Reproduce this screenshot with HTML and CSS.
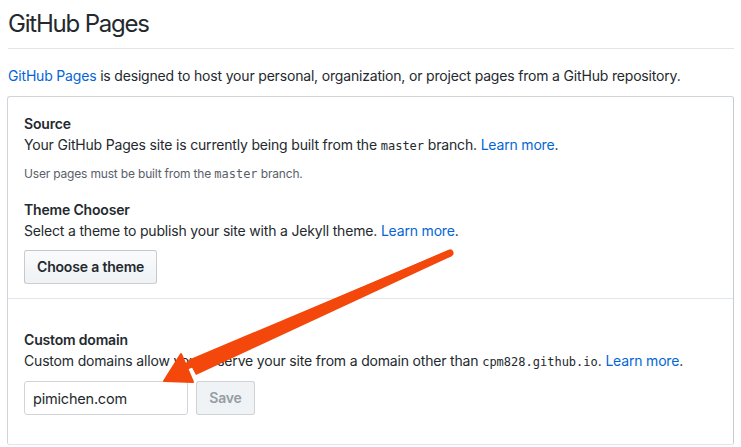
FILE: index.html
```html
<!DOCTYPE html>
<html>
<head>
<meta charset="utf-8">
<link rel="stylesheet" href="styles.css">
</head>
<body>
<div class="page">
  <h2 class="title">GitHub Pages</h2>
  <p class="intro"><a href="#">GitHub Pages</a> is designed to host your personal, organization, or project pages from a GitHub repository.</p>
  <div class="box">
    <div class="section first">
      <h3 class="label">Source</h3>
      <p class="text">Your GitHub Pages site is currently being built from the <code>master</code> branch. <a href="#">Learn more</a>.</p>
      <p class="note">User pages must be built from the <code>master</code> branch.</p>
      <h3 class="label spaced">Theme Chooser</h3>
      <p class="text">Select a theme to publish your site with a Jekyll theme. <a href="#">Learn more</a>.</p>
      <button class="btn">Choose a theme</button>
    </div>
    <div class="section second">
      <h3 class="label">Custom domain</h3>
      <p class="text">Custom domains allow you to serve your site from a domain other than <code>cpm828.github.io</code>. <a href="#">Learn more</a>.</p>
      <div class="form-row">
        <input class="field" type="text" value="pimichen.com">
        <button class="btn disabled">Save</button>
      </div>
    </div>
  </div>
</div>
<svg class="arrow" width="741" height="447" viewBox="0 0 741 447">
  <path d="M450 253 L187 366" stroke="#f4470b" stroke-width="7" stroke-linecap="round" fill="none"/>
  <path d="M449 250 L452 256 L196 375 L188 360 Z" fill="#f4470b"/>
  <polygon points="164,381 181,354 193,382" fill="#f4470b" stroke="#f4470b" stroke-width="2" stroke-linejoin="round"/>
</svg>
</body>
</html>
```
FILE: styles.css
```css
html, body {
  margin: 0;
  padding: 0;
  background: #fff;
}
body {
  font-family: Inter, "Liberation Sans", Arial, sans-serif;
  color: #24292e;
  font-size: 14px;
  line-height: 1.5;
  letter-spacing: -0.18px;
  position: relative;
  overflow: hidden;
  height: 447px;
}
.page {
  margin-left: 7px;
  width: 727px;
}
a {
  color: #0366d6;
  text-decoration: none;
}
code {
  font-family: "DejaVu Sans Mono", monospace;
  font-size: 12px;
  letter-spacing: 0;
}
.title {
  margin: 9px 0 0 1px;
  font-size: 24px;
  font-weight: 400;
  line-height: 30px;
  padding-bottom: 9px;
  border-bottom: 1px solid #e1e4e8;
  letter-spacing: -1.2px;
}
.intro {
  margin: 16px 0 10px 1px;
  line-height: 21px;
}
.box {
  border: 1px solid #d1d5da;
  border-radius: 3px;
  border-bottom: 0;
  border-right-color: #c6cbd1;
}
.section {
  padding: 16px;
}
.section.first {
  padding-bottom: 14px;
}
.section.second {
  border-top: 1px solid #e1e4e8;
  padding-top: 30px;
  padding-bottom: 29px;
  border-bottom: 1px solid #e1e4e8;
}
.label {
  margin: 0;
  font-size: 14px;
  font-weight: 600;
  line-height: 21px;
}
.label.spaced {
  margin-top: 16px;
}
.text {
  margin: 0;
  line-height: 21px;
}
.note {
  margin: 8px 0 0;
  font-size: 12px;
  line-height: 18px;
  color: #586069;
}
.btn {
  margin-top: 8px;
  font-family: inherit;
  font-size: 14px;
  font-weight: 600;
  letter-spacing: -0.18px;
  line-height: 20px;
  padding: 6px 12px;
  color: #24292e;
  background: linear-gradient(#fafbfc, #eff3f6 90%);
  border: 1px solid rgba(27, 31, 35, 0.2);
  border-radius: 3px;
  height: 34px;
}
.section.first .btn {
  margin-top: 9px;
}
.form-row {
  display: flex;
  gap: 8px;
  margin-top: 8px;
}
.form-row .btn {
  margin-top: 0;
}
.field {
  width: 164px;
  height: 34px;
  box-sizing: border-box;
  padding: 6px 8px;
  font-family: inherit;
  font-size: 14.5px;
  letter-spacing: -0.2px;
  color: #24292e;
  border: 1px solid #d1d5da;
  border-radius: 3px;
  outline: none;
}
.btn.disabled {
  color: #959da5;
  background: #eff3f6;
  border-color: rgba(27, 31, 35, 0.15);
  width: 59px;
  padding: 6px 0;
}
.arrow {
  position: absolute;
  left: 0;
  top: 0;
  pointer-events: none;
}
```
